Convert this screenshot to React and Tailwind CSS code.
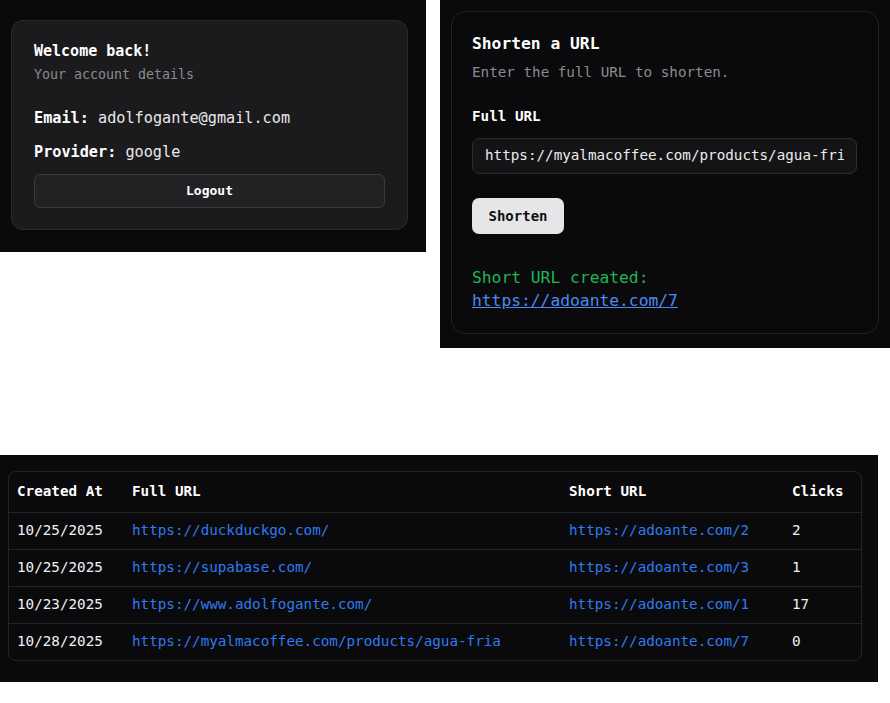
import React from 'react';

const mono = { fontFamily: '"DejaVu Sans Mono", "Liberation Mono", monospace' };

const links = [
  { created: '10/25/2025', full: 'https://duckduckgo.com/', short: 'https://adoante.com/2', clicks: 2 },
  { created: '10/25/2025', full: 'https://supabase.com/', short: 'https://adoante.com/3', clicks: 1 },
  { created: '10/23/2025', full: 'https://www.adolfogante.com/', short: 'https://adoante.com/1', clicks: 17 },
  { created: '10/28/2025', full: 'https://myalmacoffee.com/products/agua-fria', short: 'https://adoante.com/7', clicks: 0 },
];

// Account card (top left)
const AccountCard = () => (
  <div className="w-[426px] h-[252px] bg-[#0a0a0c] pl-[11px] pt-[20px]">
    <div className="w-[397px] h-[210px] rounded-[12px] border border-[#2b2b2e] bg-[#1b1b1d] px-[22px] pt-[19px]">
      <h2 className="text-[15px] leading-[22px] font-bold text-white">Welcome back!</h2>
      <p className="text-[13.3px] leading-[20px] mt-[3px] text-[#8a8a8e]">Your account details</p>
      <p className="text-[15.2px] leading-[22px] mt-[22px] text-[#e8e8ea]">
        <span className="font-bold text-white">Email:</span> adolfogante@gmail.com
      </p>
      <p className="text-[15.2px] leading-[22px] mt-[12px] text-[#e8e8ea]">
        <span className="font-bold text-white">Provider:</span> google
      </p>
      <button className="mt-[11px] w-full h-[34px] rounded-[6px] border border-[#3a3a3d] bg-[#222224] text-[13px] font-bold text-white">
        Logout
      </button>
    </div>
  </div>
);

// Shorten form (top right)
const ShortenCard = () => (
  <div className="w-[450px] h-[348px] bg-[#0a0a0c] pl-[11px] pt-[11px]">
    <div className="w-[428px] h-[323px] rounded-[14px] border border-[#222225] bg-[#0a0a0c] px-[20px] pt-[21px]">
      <h2 className="text-[16.3px] leading-[22px] font-bold text-white">Shorten a URL</h2>
      <p className="text-[14.25px] leading-[20px] mt-[7px] text-[#8a8a8e]">Enter the full URL to shorten.</p>
      <label className="block text-[14.25px] leading-[20px] mt-[24px] font-bold text-white">Full URL</label>
      <div className="mt-[12px] w-[385px] h-[36px] rounded-[7px] border border-[#2e2e31] bg-[#141416] pl-[12px] pr-[12px] flex items-center overflow-hidden">
        <span className="text-[14.25px] whitespace-nowrap overflow-hidden text-[#ececee]">
          https://myalmacoffee.com/products/agua-fria
        </span>
      </div>
      <button className="mt-[24px] w-[92px] h-[36px] rounded-[7px] bg-[#e6e6e8] text-[14px] font-semibold text-[#111]">
        Shorten
      </button>
      <p className="text-[16.3px] leading-[23px] mt-[32px] text-[#1fb753]">Short URL created:</p>
      <a href="#" className="text-[16.3px] leading-[23px] text-[#4a8af2] underline">https://adoante.com/7</a>
    </div>
  </div>
);

// Links table (bottom)
const LinksTable = () => (
  <div className="w-[878px] h-[227px] bg-[#0a0a0c] pl-[8px] pt-[16px]">
    <div className="w-[854px] rounded-[8px] border border-[#242427] overflow-hidden">
      <table className="w-full text-[14.25px] border-collapse">
        <thead>
          <tr className="h-[40px] text-left">
            <th className="pl-[8px] w-[123px] font-bold text-white">Created At</th>
            <th className="w-[437px] font-bold text-white">Full URL</th>
            <th className="w-[223px] font-bold text-white">Short URL</th>
            <th className="font-bold text-white">Clicks</th>
          </tr>
        </thead>
        <tbody>
          {links.map(link => (
            <tr key={link.short} className="h-[37px] border-t border-[#242427]">
              <td className="pl-[8px] text-[#f0f0f2]">{link.created}</td>
              <td className="text-[#2f7af0]">{link.full}</td>
              <td className="text-[#2f7af0]">{link.short}</td>
              <td className="text-[#f0f0f2]">{link.clicks}</td>
            </tr>
          ))}
        </tbody>
      </table>
    </div>
  </div>
);

export default function App() {
  return (
    <div className="min-h-screen bg-white" style={mono}>
      <div className="flex items-start gap-[14px]">
        <AccountCard />
        <ShortenCard />
      </div>
      <div className="mt-[107px]">
        <LinksTable />
      </div>
    </div>
  );
}
